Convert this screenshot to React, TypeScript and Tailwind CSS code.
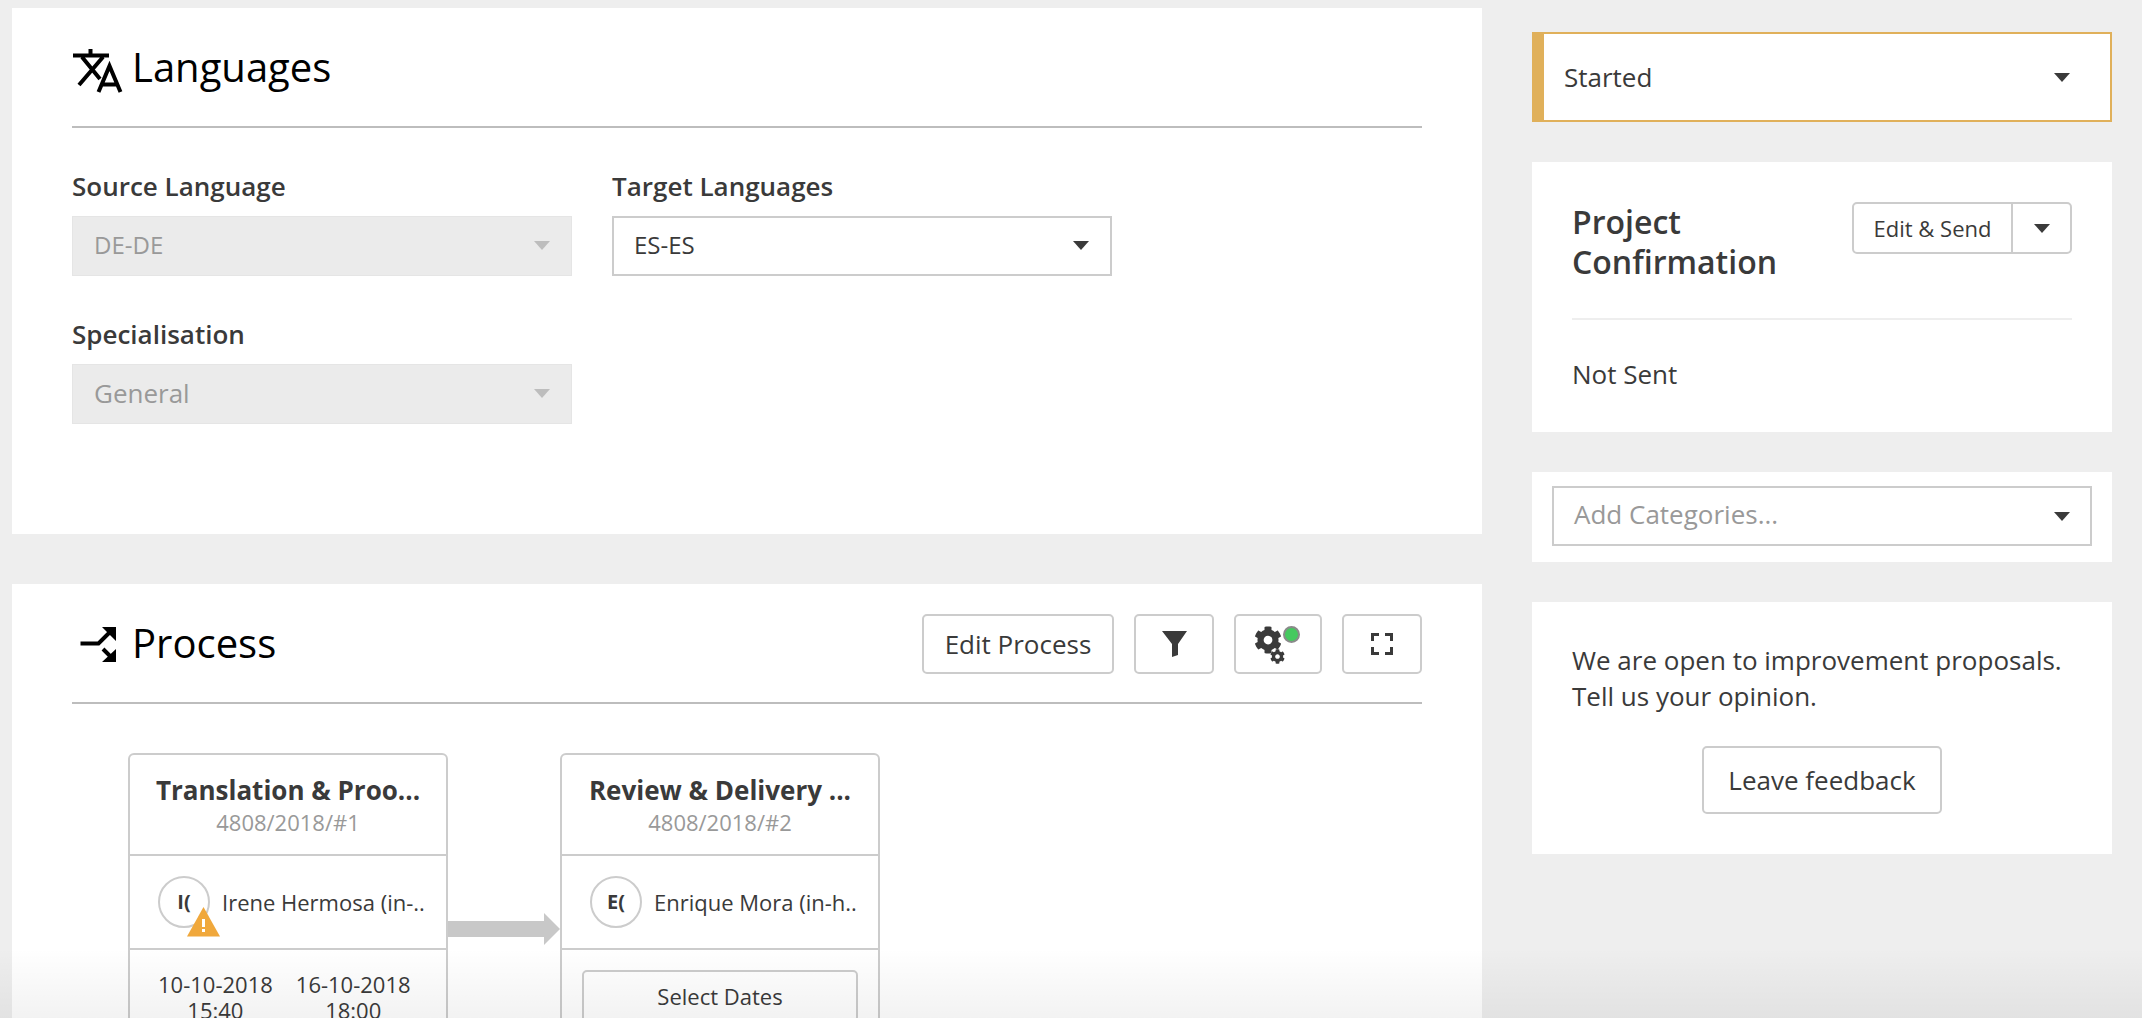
import React from 'react'
import { FaCog } from 'react-icons/fa'

const Caret = ({ className = 'border-t-[#3a3a3a]' }: { className?: string }) => (
  <span className={`h-0 w-0 border-x-[8px] border-t-[9px] border-x-transparent ${className}`} />
)

const SectionHeader = ({ icon, title, children }: { icon: React.ReactNode; title: string; children?: React.ReactNode }) => (
  <div className="flex h-[120px] items-center border-b-2 border-[#bdbdbd] pt-[2px]">
    {icon}
    <h2 className="pb-[2px] text-[40px] leading-[50px] text-black">{title}</h2>
    {children && <div className="ml-auto flex items-center gap-[20px]">{children}</div>}
  </div>
)

const Field = ({ label, value, size, disabled }: { label: string; value: string; size: string; disabled?: boolean }) => (
  <div className="w-[500px]">
    <label className="block h-[47px] text-[26px] leading-[34px] font-semibold text-[#3a3a3a]">{label}</label>
    {disabled ? (
      <div className={`flex h-[60px] items-center justify-between border border-[#e5e5e5] bg-[#ebebeb] pr-[21px] pb-[2px] pl-[21px] text-[#999] ${size}`}>
        {value}
        <Caret className="border-t-[#bdbdbd]" />
      </div>
    ) : (
      <div className={`flex h-[60px] items-center justify-between border-2 border-[#ccc] bg-white pr-[21px] pb-[2px] pl-[20px] text-[#3a3a3a] ${size}`}>
        {value}
        <Caret />
      </div>
    )}
  </div>
)

const IconButton = ({ width, children }: { width: string; children: React.ReactNode }) => (
  <button className={`relative flex h-[60px] items-center justify-center rounded-[5px] border-2 border-[#ccc] bg-white ${width}`}>
    {children}
  </button>
)

const NodeHead = ({ title, code }: { title: string; code: string }) => (
  <div className="h-[101px] border-b-2 border-[#ccc] pt-[17px] text-center">
    <div className="text-[26px] leading-[36px] font-bold whitespace-nowrap text-[#3a3a3a]">{title}</div>
    <div className="text-[22px] leading-[28px] text-[#999]">{code}</div>
  </div>
)

const Assignee = ({ initials, name, warn }: { initials: string; name: string; warn?: boolean }) => (
  <div className="flex h-[94px] items-center border-b-2 border-[#ccc] pl-[28px]">
    <div className="relative flex h-[52px] w-[52px] shrink-0 items-center justify-center rounded-full border-2 border-[#ccc] bg-white text-[20px] font-bold text-[#3a3a3a]">
      {initials}
      {warn && (
        <svg className="absolute top-[29px] left-[27px]" width="33" height="30" viewBox="0 0 33 30">
          <path d="M16.5 0 L33 29.5 H0 Z" fill="#f0a83c" />
          <rect x="15" y="12" width="3" height="8" fill="#fff" />
          <rect x="15" y="22" width="3" height="3" fill="#fff" />
        </svg>
      )}
    </div>
    <span className="ml-[12px] text-[22px] whitespace-nowrap text-[#3a3a3a]">{name}</span>
  </div>
)

const DateCell = ({ date, time }: { date: string; time: string }) => (
  <div className="text-center text-[22px] leading-[26px] text-[#3a3a3a]">
    <div>{date}</div>
    <div>{time}</div>
  </div>
)

const App = () => {
  return (
    <div className="relative flex h-[1018px] w-[2142px] overflow-hidden bg-[#eee] pt-2 pl-3 font-['Open_Sans',sans-serif] text-[#3a3a3a]">
      {/* Main column */}
      <div className="flex w-[1470px] shrink-0 flex-col gap-[50px]">
        {/* Languages */}
        <section className="h-[526px] shrink-0 bg-white px-[60px]">
          <SectionHeader
            title="Languages"
            icon={
              <svg className="mt-[3px] mr-[9px]" width="51" height="46" viewBox="0 0 51 46" fill="none" stroke="#000" strokeWidth="4">
                <path d="M1 8.5 H37 M18.5 2 V8.5 M10 10 L28 32 M31 10 L7 38" />
                <path d="M26.5 45 L37.5 19 L48.5 45 M30 37.5 H45" />
              </svg>
            }
          />
          <div className="mt-[41px] flex gap-[40px]">
            <Field label="Source Language" value="DE-DE" size="text-[24px]" disabled />
            <Field label="Target Languages" value="ES-ES" size="text-[24px]" />
          </div>
          <div className="mt-[41px]">
            <Field label="Specialisation" value="General" size="text-[26px]" disabled />
          </div>
        </section>

        {/* Process */}
        <section className="flex-1 bg-white px-[60px]">
          <SectionHeader
            title="Process"
            icon={
              <svg className="mt-[2px] mr-[15px] ml-[8px]" width="37" height="38" viewBox="0 0 37 38" fill="none">
                <path d="M0.5 17.5 H18.5 L29 7 M23 23 L32 32" stroke="#000" strokeWidth="4" />
                <path d="M22 1 H36 V15 Z M36 36 H22 L36 23 Z" fill="#000" />
              </svg>
            }
          >
            <button className="h-[60px] w-[192px] rounded-[5px] border-2 border-[#ccc] bg-white text-[26px] text-[#3a3a3a]">
              Edit Process
            </button>
            <IconButton width="w-[80px]">
              <svg width="25" height="26" viewBox="0 0 25 26">
                <path d="M0 0 H25 L16 13 V24 L10 26 V13 Z" fill="#3a3a3a" />
              </svg>
            </IconButton>
            <IconButton width="w-[88px]">
              <FaCog className="absolute top-[10px] left-[18px] text-[28px] text-[#3a3a3a]" />
              <FaCog className="absolute top-[33px] left-[34px] text-[15px] text-[#3a3a3a]" />
              <span className="absolute top-[10px] left-[47px] h-[17px] w-[17px] rounded-full border-2 border-[#8a8a8a] bg-[#45c95f]" />
            </IconButton>
            <IconButton width="w-[80px]">
              <svg width="22" height="22" viewBox="0 0 22 22" fill="none" stroke="#3a3a3a" strokeWidth="3">
                <path d="M1.5 8 V1.5 H8 M14 1.5 H20.5 V8 M20.5 14 V20.5 H14 M8 20.5 H1.5 V14" />
              </svg>
            </IconButton>
          </SectionHeader>

          <div className="mt-[49px] ml-[56px] flex items-start">
            <div className="h-[400px] w-[320px] shrink-0 rounded-t-[6px] border-2 border-[#ccc]">
              <NodeHead title="Translation & Proo..." code="4808/2018/#1" />
              <Assignee initials="I(" name="Irene Hermosa (in-.." warn />
              <div className="flex gap-[23px] pt-[21px] pl-[28px]">
                <DateCell date="10-10-2018" time="15:40" />
                <DateCell date="16-10-2018" time="18:00" />
              </div>
            </div>

            <svg className="mt-[160px] shrink-0" width="112" height="32" viewBox="0 0 112 32">
              <path d="M0 8 H96 V0 L112 16 L96 32 V24 H0 Z" fill="#c8c8c8" />
            </svg>

            <div className="h-[400px] w-[320px] shrink-0 rounded-t-[6px] border-2 border-[#ccc]">
              <NodeHead title="Review & Delivery ..." code="4808/2018/#2" />
              <Assignee initials="E(" name="Enrique Mora (in-h.." />
              <div className="px-[20px] pt-[20px]">
                <button className="h-[52px] w-full rounded-[5px] border-2 border-[#ccc] bg-white text-[22px] text-[#3a3a3a]">
                  Select Dates
                </button>
              </div>
            </div>
          </div>
        </section>
      </div>

      {/* Sidebar */}
      <aside className="ml-[50px] flex w-[580px] shrink-0 flex-col gap-[40px] pt-[24px]">
        <div className="flex h-[90px] items-center justify-between border-2 border-l-[12px] border-[#e0b05a] bg-white pr-[40px] pl-[20px] text-[26px]">
          Started
          <Caret />
        </div>

        <div className="h-[270px] bg-white px-[40px] pt-[40px]">
          <div className="flex h-[118px] items-start justify-between border-b-2 border-[#eee]">
            <h3 className="text-[32px] leading-[40px] font-semibold">
              Project
              <br />
              Confirmation
            </h3>
            <div className="flex h-[52px] w-[220px] rounded-[5px] border-2 border-[#ccc] text-[22px]">
              <span className="flex w-[159px] items-center justify-center border-r-2 border-[#ccc]">Edit &amp; Send</span>
              <span className="flex flex-1 items-center justify-center">
                <Caret />
              </span>
            </div>
          </div>
          <p className="mt-[36px] text-[26px] leading-[36px]">Not Sent</p>
        </div>

        <div className="h-[90px] bg-white px-[20px] pt-[14px]">
          <div className="flex h-[60px] items-center justify-between border-2 border-[#ccc] pr-[20px] pl-[20px] text-[26px] text-[#999]">
            <span className="pb-[3px]">Add Categories...</span>
            <Caret />
          </div>
        </div>

        <div className="h-[252px] bg-white px-[40px] pt-[40px]">
          <p className="text-[26px] leading-[36px]">
            We are open to improvement proposals.
            <br />
            Tell us your opinion.
          </p>
          <div className="mt-[32px] flex justify-center">
            <button className="h-[68px] w-[240px] rounded-[5px] border-2 border-[#ccc] bg-white text-[26px]">
              Leave feedback
            </button>
          </div>
        </div>
      </aside>

      {/* bottom fade over the page */}
      <div className="pointer-events-none absolute right-0 bottom-0 left-0 h-[70px] bg-gradient-to-b from-black/0 to-black/5" />
    </div>
  )
}

export default App
